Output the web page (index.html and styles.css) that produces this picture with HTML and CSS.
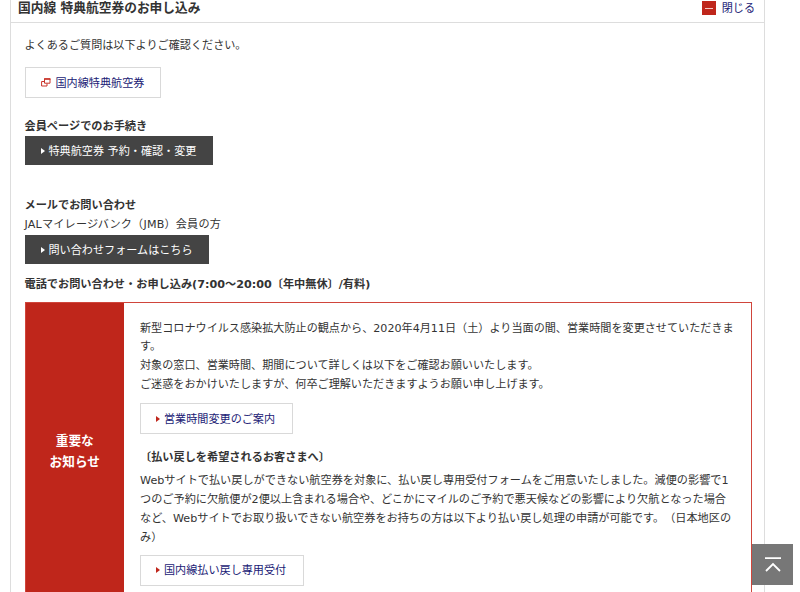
FILE: index.html
```
<!DOCTYPE html>
<html lang="ja">
<head>
  <meta charset="UTF-8">
  <title>国内線 特典航空券のお申し込み</title>
  <link rel="stylesheet" href="styles.css">
</head>
<body>
  <div class="panel">
    <div class="panel-header">
      <h2>国内線 特典航空券のお申し込み</h2>
      <a href="#" class="close-link"><span class="close-icon"></span>閉じる</a>
    </div>

    <div class="panel-body">
      <p class="lead">よくあるご質問は以下よりご確認ください。</p>
      <a href="#" class="btn btn-faq">
        <svg class="icon-window" viewBox="0 0 10 9" width="10" height="9">
          <path d="M3.5 0.8h5.5v4.4h-5.5z M3.2 3.5H0.6v4.5h5.4V5.5" fill="none" stroke="#c9342a" stroke-width="1"/>
          <path d="M3 0.3h6.5v1.5H3z" fill="#c9342a"/>
        </svg>国内線特典航空券</a>

      <h3 class="member-title">会員ページでのお手続き</h3>
      <a href="#" class="btn btn-dark btn-member"><span class="arrow"></span>特典航空券 予約・確認・変更</a>

      <h3 class="mail-title">メールでお問い合わせ</h3>
      <p class="mail-text">JALマイレージバンク（JMB）会員の方</p>
      <a href="#" class="btn btn-dark"><span class="arrow"></span>問い合わせフォームはこちら</a>

      <h3 class="tel-title">電話でお問い合わせ・お申し込み(7:00～20:00〔年中無休〕/有料)</h3>

      <div class="notice">
        <div class="notice-label">重要な<br>お知らせ</div>
        <div class="notice-body">
          <p>新型コロナウイルス感染拡大防止の観点から、2020年4月11日（土）より当面の間、営業時間を変更させていただきま<br>す。<br>対象の窓口、営業時間、期間について詳しくは以下をご確認お願いいたします。<br>ご迷惑をおかけいたしますが、何卒ご理解いただきますようお願い申し上げます。</p>
          <a href="#" class="btn"><span class="arrow"></span>営業時間変更のご案内</a>
          <h3 class="refund-title">〔払い戻しを希望されるお客さまへ〕</h3>
          <p class="refund-text">Webサイトで払い戻しができない航空券を対象に、払い戻し専用受付フォームをご用意いたしました。減便の影響で1<br>つのご予約に欠航便が2便以上含まれる場合や、どこかにマイルのご予約で悪天候などの影響により欠航となった場合<br>など、Webサイトでお取り扱いできない航空券をお持ちの方は以下より払い戻し処理の申請が可能です。（日本地区の<br>み）</p>
          <a href="#" class="btn btn-refund"><span class="arrow"></span>国内線払い戻し専用受付</a>
        </div>
      </div>
    </div>
  </div>

  <a href="#" class="page-top">
    <svg viewBox="0 0 16 15" width="16" height="15">
      <path d="M0 1.2h16M1 14l7-7 7 7" fill="none" stroke="#fff" stroke-width="1.8"/>
    </svg>
  </a>
</body>
</html>
```
FILE: styles.css
```
* {
  box-sizing: border-box;
}

body {
  margin: 0;
  background: #fff;
  color: #333;
  font-family: "DejaVu Sans", "Noto Sans CJK JP", sans-serif;
  font-size: 11.11px;
  line-height: 18.9px;
  text-spacing-trim: space-all;
  white-space: nowrap;
}

h2,
h3,
p {
  margin: 0;
}

h3 {
  font-size: 11.18px;
}

a {
  color: #1a1a75;
  text-decoration: none;
}

.panel {
  width: 755px;
  height: 592px;
  margin-left: 10px;
  border: solid #ddd;
  border-width: 0 1px;
  overflow: hidden;
}

.panel-header {
  display: flex;
  justify-content: space-between;
  height: 23px;
  padding: 0 9px 0 7px;
  border-bottom: 1px solid #ddd;
}

.panel-header h2 {
  font-size: 12.72px;
  line-height: 15px;
}

.close-link {
  display: flex;
  line-height: 17px;
}

.close-icon {
  display: flex;
  align-items: center;
  justify-content: center;
  width: 14px;
  height: 14px;
  margin: 1px 6px 0 0;
  background: #bf261b;
}

.close-icon::before {
  content: "";
  width: 8px;
  height: 1px;
  background: #f3c9c5;
}

.panel-body {
  padding: 14px 12px 0 13.5px;
}

.btn {
  display: flex;
  align-items: center;
  width: fit-content;
  height: 31px;
  padding: 3px 16.5px 0 15px;
  border: 1px solid #d9d9d9;
}

.btn-dark {
  height: 29px;
  padding: 4px 16px 0 15px;
  border: 0;
  background: #444;
  color: #fff;
}

.arrow {
  margin: 0 4px 3px 0;
  border: solid transparent;
  border-width: 3px 0 3px 4px;
  border-left-color: #bf261b;
}

.btn-dark .arrow {
  margin-left: 1px;
  border-left-color: #fff;
}

.btn-member {
  padding-right: 17px;
}

.btn-faq {
  margin-top: 11px;
  padding: 4px 16px 0 15px;
}

.icon-window {
  margin: 0 5px 4px 0;
}

.member-title {
  margin: 20px 0 -1px;
}

.mail-title {
  margin-top: 32px;
}

.mail-text {
  letter-spacing: 0.2px;
}

.tel-title {
  margin-top: 12px;
}

.notice {
  display: flex;
  width: 727.5px;
  height: 320px;
  margin-top: 7px;
  border: 1px solid #d0453b;
}

.notice-label {
  width: 98.5px;
  padding-top: 127px;
  background: #bf261b;
  color: #fff;
  font-size: 12.68px;
  font-weight: bold;
  line-height: 21.5px;
  text-align: center;
}

.notice-body {
  padding: 17px 0 0 16px;
}

.notice-body .btn {
  margin-top: 8px;
}

.refund-title {
  margin: 15px 0 4px;
}

.refund-text {
  font-size: 11.16px;
}

.notice-body .btn-refund {
  margin-top: 7px;
}

.page-top {
  position: fixed;
  right: 7px;
  bottom: 7px;
  display: flex;
  align-items: center;
  justify-content: center;
  width: 41px;
  height: 41px;
  background: #777;
}
```
